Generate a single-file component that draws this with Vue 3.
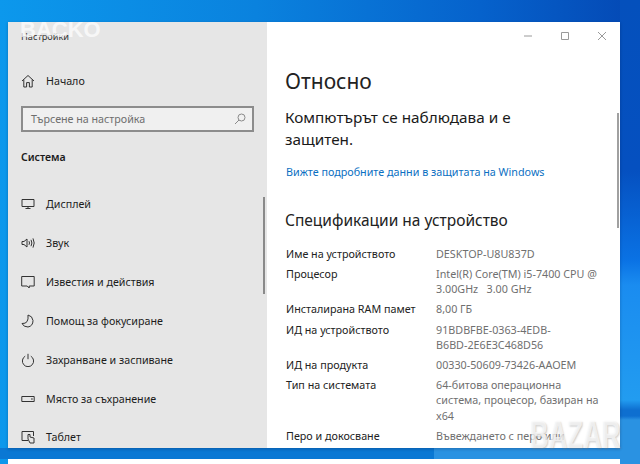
<script setup>
const navItems = [
  { label: 'Дисплей', icon: 'display' },
  { label: 'Звук', icon: 'sound' },
  { label: 'Известия и действия', icon: 'notify' },
  { label: 'Помощ за фокусиране', icon: 'moon' },
  { label: 'Захранване и заспиване', icon: 'power' },
  { label: 'Място за съхранение', icon: 'storage' },
  { label: 'Таблет', icon: 'tablet' },
]
const specs = [
  ['Име на устройството', 'DESKTOP-U8U837D'],
  ['Процесор', 'Intel(R) Core(TM) i5-7400 CPU @ 3.00GHz   3.00 GHz'],
  ['Инсталирана RAM памет', '8,00 ГБ'],
  ['ИД на устройството', '91BDBFBE-0363-4EDB-\nB6BD-2E6E3C468D56'],
  ['ИД на продукта', '00330-50609-73426-AAOEM'],
  ['Тип на системата', '64-битова операционна система, процесор, базиран на x64'],
  ['Перо и докосване', 'Въвеждането с перо или'],
]
</script>

<template>
  <div class="desktop">
    <div class="window">
      <aside class="sidebar">
        <div class="app-title">Настройки</div>
        <div class="home-row">
          <svg class="icon" viewBox="0 0 14 14" width="14" height="14">
            <path d="M1 7 7 1.5 13 7M2.8 5.6V13H5.6V8.6H8.4V13H11.2V5.6" />
          </svg>
          <span>Начало</span>
        </div>
        <div class="search">
          <span>Търсене на настройка</span>
          <svg class="search-icon" viewBox="0 0 12 12" width="12" height="12">
            <circle cx="7.5" cy="4.5" r="3.5" />
            <path d="M5 7 1 11" />
          </svg>
        </div>
        <div class="section">Система</div>
        <nav class="nav">
          <div v-for="item in navItems" :key="item.label" class="nav-row">
            <svg class="icon" viewBox="0 0 14 14" width="14" height="14">
              <template v-if="item.icon === 'display'">
                <path d="M1 2.5H13V9.5H1ZM7 9.5V11.5M4.5 11.5H9.5" />
              </template>
              <template v-else-if="item.icon === 'sound'">
                <path d="M1 5.5H3L6 3V11L3 8.5H1ZM8 5.2Q9 7 8 8.8M10 3.8Q11.8 7 10 10.2M12 2.4Q14.4 7 12 11.6" />
              </template>
              <template v-else-if="item.icon === 'notify'">
                <path d="M1 1.5H13.5V11H8.5V13L6.5 11H1Z" transform="translate(-.3 0)" />
              </template>
              <template v-else-if="item.icon === 'moon'">
                <path d="M7 1Q11.5 2 12 6.5 12 12 7 13 2.5 13 1 9.5 8 10 7 1Z" />
              </template>
              <template v-else-if="item.icon === 'power'">
                <path d="M4.2 3.2A5.6 5.6 0 1 0 9.8 3.2M7 .8V6.2" />
              </template>
              <template v-else-if="item.icon === 'storage'">
                <path d="M.8 4.5H13.2V9.5H.8ZM10 7H11.8" />
              </template>
              <template v-else>
                <path d="M7 10.5H1V1.5H12.5V6M7 4.5V9L9 13H13V8L9 7V4.5Z" />
              </template>
            </svg>
            <span>{{ item.label }}</span>
          </div>
        </nav>
        <div class="scrollbar"></div>
      </aside>

      <main class="content">
        <div class="controls">
          <svg viewBox="0 0 10 10" width="10" height="10"><path d="M1 5H9" /></svg>
          <svg viewBox="0 0 10 10" width="10" height="10"><path d="M1.5 1.5H8.5V8.5H1.5Z" /></svg>
          <svg viewBox="0 0 10 10" width="10" height="10"><path d="M1 1 9 9M9 1 1 9" /></svg>
        </div>
        <h1>Относно</h1>
        <p class="status">Компютърът се наблюдава и е защитен.</p>
        <a class="link">Вижте подробните данни в защитата на Windows</a>
        <h2>Спецификации на устройство</h2>
        <dl class="specs">
          <template v-for="row in specs" :key="row[0]">
            <dt>{{ row[0] }}</dt>
            <dd>{{ row[1] }}</dd>
          </template>
        </dl>
        <div class="content-scroll"></div>
      </main>
    </div>
    <div class="bottom-window"></div>
    <div class="mark-top">BACKO</div>
    <div class="mark-bottom">BAZAR</div>
  </div>
</template>

<style>
body { margin: 0; }
</style>

<style scoped>
.desktop {
  position: relative;
  width: 640px;
  height: 464px;
  box-sizing: border-box;
  padding: 22px 20px 0 8px;
  overflow: hidden;
  background:
    linear-gradient(90deg, #0a78d4, #0a78d4) 0 448px / 434px 11px no-repeat,
    linear-gradient(90deg, #2a92e2, #2a92e2) 434px 448px / 186px 11px no-repeat,
    linear-gradient(180deg, #0450bc 0, #0550c0 170px, #0a72e4 260px, #1a8cf0 285px, #229cf0 400px, #0e6fd0 410px, #0e6fd0 416px, #2a92e2 420px, #2a92e2 100%) 620px 0 / 20px 464px no-repeat,
    linear-gradient(90deg, #0c98ec 0, #0a82de 40%, #0662cc 75%, #0448b4 100%);
  font-family: "Noto Sans", "Open Sans", sans-serif;
  color: #1c1c1c;
}
.window {
  display: flex;
  height: 426px;
  box-shadow: 0 1px 3px rgba(0, 0, 40, .25);
}
.sidebar {
  position: relative;
  flex: 0 0 259px;
  box-sizing: border-box;
  padding-left: 13px;
  background: #e6e6e6;
  overflow: hidden;
  font-size: 10.7px;
}
.app-title {
  height: 14px;
  margin-top: 8px;
  line-height: 14px;
  font-size: 9.2px;
  color: #333;
}
.home-row, .nav-row {
  display: flex;
  align-items: center;
  gap: 11px;
  height: 38.85px;
}
.home-row { margin-top: 17px; height: 40px; }
.icon {
  flex: none;
  fill: none;
  stroke: #333;
  stroke-width: 1;
}
.search {
  display: flex;
  align-items: center;
  justify-content: space-between;
  box-sizing: border-box;
  width: 233px;
  height: 26px;
  margin-top: 5px;
  padding: 0 6px 0 8px;
  border: 2px solid #8c8c8c;
  background: #f0f0f0;
  color: #6e6e6e;
}
.search-icon { fill: none; stroke: #8a8a8a; stroke-width: 1; }
.section {
  margin-top: 17px;
  height: 17px;
  line-height: 17px;
  font-size: 10.5px;
  font-weight: 600;
  color: #1a1a1a;
}
.nav { margin-top: 19px; }
.scrollbar {
  position: absolute;
  right: 2px;
  top: 175px;
  width: 2px;
  height: 97px;
  background: #8a8a8a;
}
.content {
  position: relative;
  flex: 1;
  box-sizing: border-box;
  padding: 0 18px 0 19px;
  background: #fff;
  overflow: hidden;
}
.content-scroll {
  position: absolute;
  right: 1px;
  top: 91px;
  width: 2px;
  height: 115px;
  background: #a0a0a0;
}
.controls {
  display: flex;
  justify-content: flex-end;
  gap: 27px;
  height: 27px;
  padding: 9px 0 0;
  margin-right: -5px;
  box-sizing: border-box;
}
.controls svg { fill: none; stroke: #9a9a9a; stroke-width: 1; }
h1 {
  margin: 17px 0 0 -1px;
  font-size: 21px;
  line-height: 30px;
  font-weight: 400;
  color: #222;
}
.status {
  margin: 10px 0 0 -1px;
  width: 260px;
  font-size: 15.3px;
  line-height: 22px;
  color: #1a1a1a;
}
.link {
  display: block;
  margin-top: 14px;
  font-size: 10.75px;
  line-height: 16px;
  color: #0a6fc2;
}
h2 {
  margin: 29px 0 0 -1px;
  font-size: 15.5px;
  line-height: 22px;
  font-weight: 400;
  color: #222;
}
.specs {
  display: grid;
  grid-template-columns: 150px 167px;
  row-gap: 4.8px;
  margin: 16px 0 0;
  font-size: 10.75px;
  line-height: 15.3px;
}
dt { color: #222; }
dd { margin: 0; color: #6f6f6f; white-space: pre-wrap; }
.bottom-window {
  height: 20px;
  margin-top: 11px;
  background: #fff;
}
.mark-top {
  position: absolute;
  left: 20px;
  top: 18px;
  font: 700 22px/24px "Liberation Sans", sans-serif;
  color: rgba(255, 255, 255, .72);
}
.mark-bottom {
  position: absolute;
  left: 530px;
  top: 414px;
  font: 700 38px/42px "Liberation Sans", sans-serif;
  color: rgba(252, 252, 252, .72);
  text-shadow: 1px 1px 2px rgba(120, 120, 120, .4);
  transform: scaleX(.68);
  transform-origin: left center;
}
</style>
